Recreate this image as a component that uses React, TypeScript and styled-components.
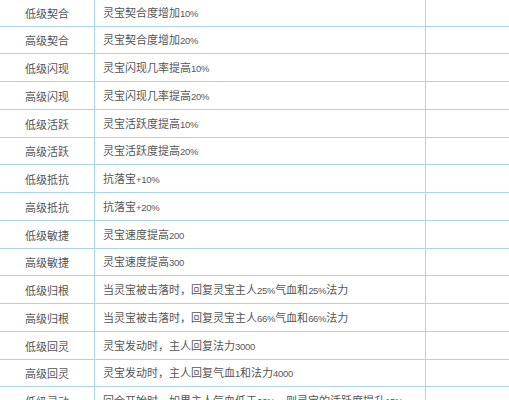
import React from "react";
import styled, { createGlobalStyle } from "styled-components";

const Global = createGlobalStyle`
  html, body { margin: 0; padding: 0; background: #ffffff; overflow: hidden; }
  body { font-family: "Noto Sans CJK SC", "Liberation Sans", sans-serif; }
`;

const Page = styled.div`
  width: 509px;
  height: 400px;
  overflow: hidden;
  background: #fff;
`;

const Table = styled.table`
  border-collapse: collapse;
  table-layout: fixed;
  width: 510px;
  margin-top: -2.25px;
  margin-left: -1px;
`;

const Row = styled.tr`
  height: 27.75px;
`;

const Cell = styled.td<{ $align?: "center" | "left" }>`
  border: 1px solid #a9d3ee;
  padding: 1px 0 0 ${(p) => (p.$align === "left" ? "8px" : "0")};
  text-align: ${(p) => p.$align ?? "center"};
  font-family: "Noto Sans CJK SC", sans-serif;
  font-size: 11px;
  line-height: 14px;
  color: #555555;
  white-space: nowrap;
  overflow: hidden;
  vertical-align: middle;
`;

const Latin = styled.span`
  font-family: "Liberation Sans", Arial, sans-serif;
  font-size: 9.5px;
  letter-spacing: -0.3px;
  color: #585858;
`;

const rows: [string, string][] = [
  ["低级契合", "灵宝契合度增加10%"],
  ["高级契合", "灵宝契合度增加20%"],
  ["低级闪现", "灵宝闪现几率提高10%"],
  ["高级闪现", "灵宝闪现几率提高20%"],
  ["低级活跃", "灵宝活跃度提高10%"],
  ["高级活跃", "灵宝活跃度提高20%"],
  ["低级抵抗", "抗落宝+10%"],
  ["高级抵抗", "抗落宝+20%"],
  ["低级敏捷", "灵宝速度提高200"],
  ["高级敏捷", "灵宝速度提高300"],
  ["低级归根", "当灵宝被击落时，回复灵宝主人25%气血和25%法力"],
  ["高级归根", "当灵宝被击落时，回复灵宝主人66%气血和66%法力"],
  ["低级回灵", "灵宝发动时，主人回复法力3000"],
  ["高级回灵", "灵宝发动时，主人回复气血1和法力4000"],
  ["低级灵动", "回合开始时，如果主人气血低于66%，则灵宝的活跃度提升15%"],
];

function MixedText({ text }: { text: string }) {
  const parts = text.split(/([\x20-\x7e]+)/).filter((s) => s.length > 0);
  return (
    <>
      {parts.map((p, i) =>
        /^[\x20-\x7e]+$/.test(p) ? <Latin key={i}>{p}</Latin> : <React.Fragment key={i}>{p}</React.Fragment>
      )}
    </>
  );
}

export default function App() {
  return (
    <Page>
      <Global />
      <Table>
        <colgroup>
          <col style={{ width: 95 }} />
          <col style={{ width: 331 }} />
          <col style={{ width: 84 }} />
        </colgroup>
        <tbody>
          {rows.map(([name, desc]) => (
            <Row key={name}>
              <Cell>{name}</Cell>
              <Cell $align="left">
                <MixedText text={desc} />
              </Cell>
              <Cell />
            </Row>
          ))}
        </tbody>
      </Table>
    </Page>
  );
}
